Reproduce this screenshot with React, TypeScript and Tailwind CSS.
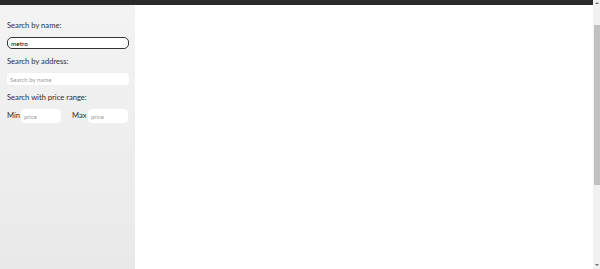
import React, { useState } from 'react';

const App = () => {
  const [name, setName] = useState('metro');

  return (
    <div className="flex h-[269px] w-[600px] overflow-hidden bg-white" style={{ fontFamily: 'Lato, "Open Sans", sans-serif' }}>
      <div className="flex flex-1 flex-col">
        {/* top bar */}
        <div className="h-[5px] bg-[#2b292c]"></div>
        <div className="flex flex-1">
          {/* sidebar */}
          <aside className="flex w-[135px] flex-col bg-gradient-to-b from-[#f3f3f3] to-[#e9e9e9] px-[7px] pt-[14px] text-[7.6px] text-[#2e2e2e]">
            <label className="mb-[6px] leading-[12px]">Search by name:</label>
            <input
              value={name}
              onChange={(e) => setName(e.target.value)}
              className="h-[12px] w-[122px] rounded-[5px] border-[1.5px] border-[#333] bg-white px-[3px] text-[6.5px] text-black outline-none"
            />
            <label className="mt-[6px] mb-[6px] leading-[12px]">Search by address:</label>
            <input
              placeholder="Search by name"
              className="h-[12px] w-[122px] rounded-[4px] bg-white px-[3px] text-[6px] outline-none placeholder:text-[#9a9a9a]"
            />
            <label className="mt-[6px] mb-[6px] leading-[12px]">Search with price range:</label>
            <div className="flex items-center">
              <span className="w-[14px] flex-none">Min</span>
              <input
                placeholder="price"
                className="h-[14px] w-[40px] min-w-0 flex-none rounded-[4px] bg-white px-[3px] text-[6px] outline-none placeholder:text-[#9a9a9a]"
              />
              <span className="ml-[11px] w-[16px] flex-none">Max</span>
              <input
                placeholder="price"
                className="h-[14px] w-[40px] min-w-0 flex-none rounded-[4px] bg-white px-[3px] text-[6px] outline-none placeholder:text-[#9a9a9a]"
              />
            </div>
          </aside>
          <main className="flex-1 bg-white"></main>
        </div>
      </div>
      {/* scrollbar */}
      <div className="flex w-[7px] flex-col items-center bg-[#f1f1f1]">
        <div className="mt-[2px] h-0 w-0 border-x-[2px] border-b-[2px] border-x-transparent border-b-[#6b6b6b]"></div>
        <div className="mt-[21px] h-[160px] w-[6px] bg-[#c1c1c1]"></div>
        <div className="flex-1"></div>
        <div className="mb-[3px] h-0 w-0 border-x-[2px] border-t-[2px] border-x-transparent border-t-[#6b6b6b]"></div>
      </div>
    </div>
  );
};

export default App;
